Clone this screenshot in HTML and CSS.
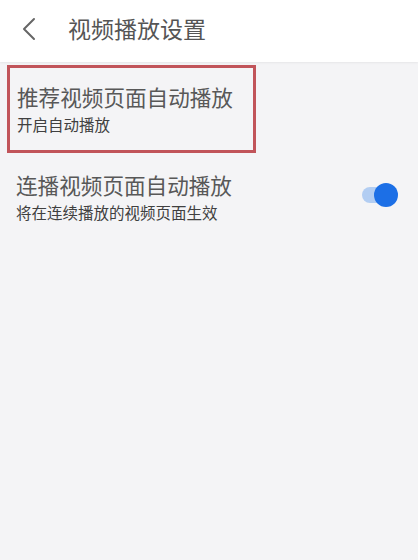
FILE: index.html
```html
<!DOCTYPE html>
<html lang="zh-CN">
<head>
    <meta charset="UTF-8">
    <meta name="viewport" content="width=device-width, initial-scale=1.0">
    <title>视频播放设置</title>
    <link rel="stylesheet" href="styles.css">
</head>
<body>

    <div class="header">
        <svg class="back" width="16" height="24" viewBox="0 0 16 24">
            <path d="M13 2 L3 12 L13 22" fill="none" stroke="#666" stroke-width="2" stroke-linecap="round" stroke-linejoin="round"/>
        </svg>
        <div class="header-title">视频播放设置</div>
    </div>

    <div class="list">
        <div class="item highlight">
            <div class="item-text">
                <div class="item-title">推荐视频页面自动播放</div>
                <div class="item-sub">开启自动播放</div>
            </div>
        </div>

        <div class="item">
            <div class="item-text">
                <div class="item-title">连播视频页面自动播放</div>
                <div class="item-sub">将在连续播放的视频页面生效</div>
            </div>
            <div class="switch on">
                <div class="knob"></div>
            </div>
        </div>
    </div>

</body>
</html>
```

FILE: styles.css
```css
body {
    font-family: "Noto Sans CJK SC", "Noto Sans", sans-serif;
    background-color: #f4f4f6;
    color: #555;
    margin: 0;
    padding: 0;
}
.header {
    height: 62px;
    background: #fff;
    display: flex;
    align-items: center;
    padding-left: 21px;
    box-shadow: 0 1px 2px rgba(0, 0, 0, 0.06);
}
.back {
    margin-top: -4px;
}
.header-title {
    margin-left: 31px;
    margin-top: -6px;
    font-size: 23px;
    color: #555;
}
.list {
    padding-top: 3px;
}
.item {
    display: flex;
    align-items: center;
    justify-content: space-between;
    padding: 0 16px;
    height: 88px;
}
.highlight {
    margin-left: 7px;
    width: 249px;
    padding: 0 0 0 7px;
    border: 3px solid #c1545a;
    box-sizing: border-box;
}
.item-title {
    font-size: 21.6px;
    line-height: 28px;
    color: #585858;
}
.item-sub {
    font-size: 15.5px;
    line-height: 22px;
    color: #404040;
    margin-top: 2px;
}
.switch {
    position: relative;
    width: 30px;
    height: 16px;
    border-radius: 8px;
    background: #b2cdf2;
    margin-right: 10px;
    margin-top: -5px;
}
.knob {
    position: absolute;
    right: -6px;
    top: -4px;
    width: 24px;
    height: 24px;
    border-radius: 50%;
    background: #1c6fe6;
}
```
